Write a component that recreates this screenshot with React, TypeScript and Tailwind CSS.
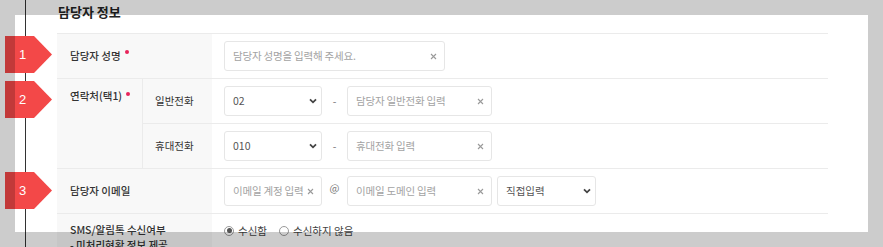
import React from 'react';

const font = "font-['Noto_Sans_CJK_KR','Noto_Sans',sans-serif]";

function ClearIcon() {
    return (
        <svg width="7" height="7" viewBox="0 0 7 7" className="shrink-0">
            <path d="M1 1L6 6M6 1L1 6" stroke="#9a9a9a" strokeWidth="1.1" />
        </svg>
    );
}

function Chevron() {
    return (
        <svg width="8" height="6" viewBox="0 0 8 6" className="shrink-0">
            <path d="M1 1.3L4 4.3L7 1.3" stroke="#444" strokeWidth="1.8" fill="none" />
        </svg>
    );
}

function TextField({ placeholder, width }: { placeholder: string; width: string }) {
    return (
        <div className={`${width} h-[30px] flex items-center justify-between border border-[#e6e6e6] rounded-[3px] bg-white pl-[8px] pr-[7px]`}>
            <span className="text-[10.5px] text-[#a3a3a3] tracking-[-0.2px]">{placeholder}</span>
            <ClearIcon />
        </div>
    );
}

function SelectBox({ value, width }: { value: string; width: string }) {
    return (
        <div className={`${width} h-[30px] flex items-center justify-between border border-[#e6e6e6] rounded-[3px] bg-white pl-[8px] pr-[4px]`}>
            <span className="text-[10.5px] text-[#555]">{value}</span>
            <Chevron />
        </div>
    );
}

function Required() {
    return <span className="inline-block w-[4px] h-[4px] rounded-full bg-[#e8245a] ml-[4px] -translate-y-[4px]" />;
}

function Marker({ num, top }: { num: number; top: string }) {
    return (
        <div className={`absolute left-[5px] ${top} w-[47px] h-[37px]`}>
            <svg width="47" height="37" viewBox="0 0 47 37" className="absolute inset-0">
                <polygon points="0,0 29,0 47,18.5 29,37 0,37" fill="#f34848" />
            </svg>
            <span className="absolute left-[14px] top-0 h-[37px] flex items-center text-[13px] text-white font-['Liberation_Sans',sans-serif]">
                {num}
            </span>
        </div>
    );
}

function Radio({ checked, label }: { checked?: boolean; label: string }) {
    return (
        <label className="flex items-center gap-[4px] text-[10.5px] text-[#444]">
            <span className="w-[10px] h-[10px] rounded-full border border-[#9a9a9a] bg-white flex items-center justify-center">
                {checked && <span className="w-[5px] h-[5px] rounded-full bg-[#555]" />}
            </span>
            {label}
        </label>
    );
}

export default function App() {
    return (
        <div className={`relative w-[883px] h-[247px] overflow-hidden bg-white ${font}`}>
            <div className="pl-[58px] pt-[3px] text-[13px] leading-[18px] font-bold text-[#222]">담당자 정보</div>

            <div className="ml-[57px] mt-[12px] w-[771px] border-t border-[#ebebeb] text-[10.5px] text-[#333]">
                {/* 담당자 성명 */}
                <div className="flex border-b border-[#ebebeb]">
                    <div className="w-[155px] bg-[#f8f8f8] pl-[13px] flex items-center font-medium">
                        담당자 성명<Required />
                    </div>
                    <div className="flex-1 flex items-center pl-[12px] py-[7px]">
                        <TextField placeholder="담당자 성명을 입력해 주세요." width="w-[221px]" />
                    </div>
                </div>

                {/* 연락처 */}
                <div className="flex border-b border-[#ebebeb]">
                    <div className="w-[86px] bg-[#f8f8f8] pl-[13px] pt-[9px] border-r border-[#ebebeb] font-medium">
                        연락처(택1)<Required />
                    </div>
                    <div className="flex-1 flex flex-col">
                        <div className="flex border-b border-[#ebebeb]">
                            <div className="w-[69px] bg-[#f8f8f8] pl-[12px] flex items-center">일반전화</div>
                            <div className="flex-1 flex items-center pl-[12px] py-[7px]">
                                <SelectBox value="02" width="w-[98px]" />
                                <span className="w-[25px] text-center text-[#777]">-</span>
                                <TextField placeholder="담당자 일반전화 입력" width="w-[145px]" />
                            </div>
                        </div>
                        <div className="flex">
                            <div className="w-[69px] bg-[#f8f8f8] pl-[12px] flex items-center">휴대전화</div>
                            <div className="flex-1 flex items-center pl-[12px] py-[7px]">
                                <SelectBox value="010" width="w-[98px]" />
                                <span className="w-[25px] text-center text-[#777]">-</span>
                                <TextField placeholder="휴대전화 입력" width="w-[145px]" />
                            </div>
                        </div>
                    </div>
                </div>

                {/* 이메일 */}
                <div className="flex border-b border-[#ebebeb]">
                    <div className="w-[155px] bg-[#f8f8f8] pl-[13px] flex items-center font-medium">담당자 이메일</div>
                    <div className="flex-1 flex items-center pl-[12px] py-[7px]">
                        <TextField placeholder="이메일 계정 입력" width="w-[98px]" />
                        <span className="w-[25px] text-center text-[#777] -translate-y-[3px]">@</span>
                        <TextField placeholder="이메일 도메인 입력" width="w-[145px]" />
                        <div className="ml-[5px]">
                            <SelectBox value="직접입력" width="w-[99px]" />
                        </div>
                    </div>
                </div>

                {/* SMS */}
                <div className="flex border-b border-[#ebebeb]">
                    <div className="w-[155px] bg-[#f8f8f8] pl-[13px] pt-[8px] pb-[6px] leading-[15px] font-medium">
                        <div>SMS/알림톡 수신여부</div>
                        <div>- 미처리현황 정보 제공</div>
                    </div>
                    <div className="flex-1 flex items-start gap-[12px] pl-[12px] pt-[9px]">
                        <Radio checked label="수신함" />
                        <Radio label="수신하지 않음" />
                    </div>
                </div>
            </div>

            {/* guide annotations */}
            <div className="absolute left-[25px] top-0 w-px h-[247px] bg-[#333]" />
            <Marker num={1} top="top-[36px]" />
            <Marker num={2} top="top-[81px]" />
            <Marker num={3} top="top-[172px]" />
            <div className="absolute left-[15px] top-[15px] w-[853px] h-[217px] shadow-[0_0_0_1000px_rgba(0,0,0,0.2)] pointer-events-none" />
        </div>
    );
}
